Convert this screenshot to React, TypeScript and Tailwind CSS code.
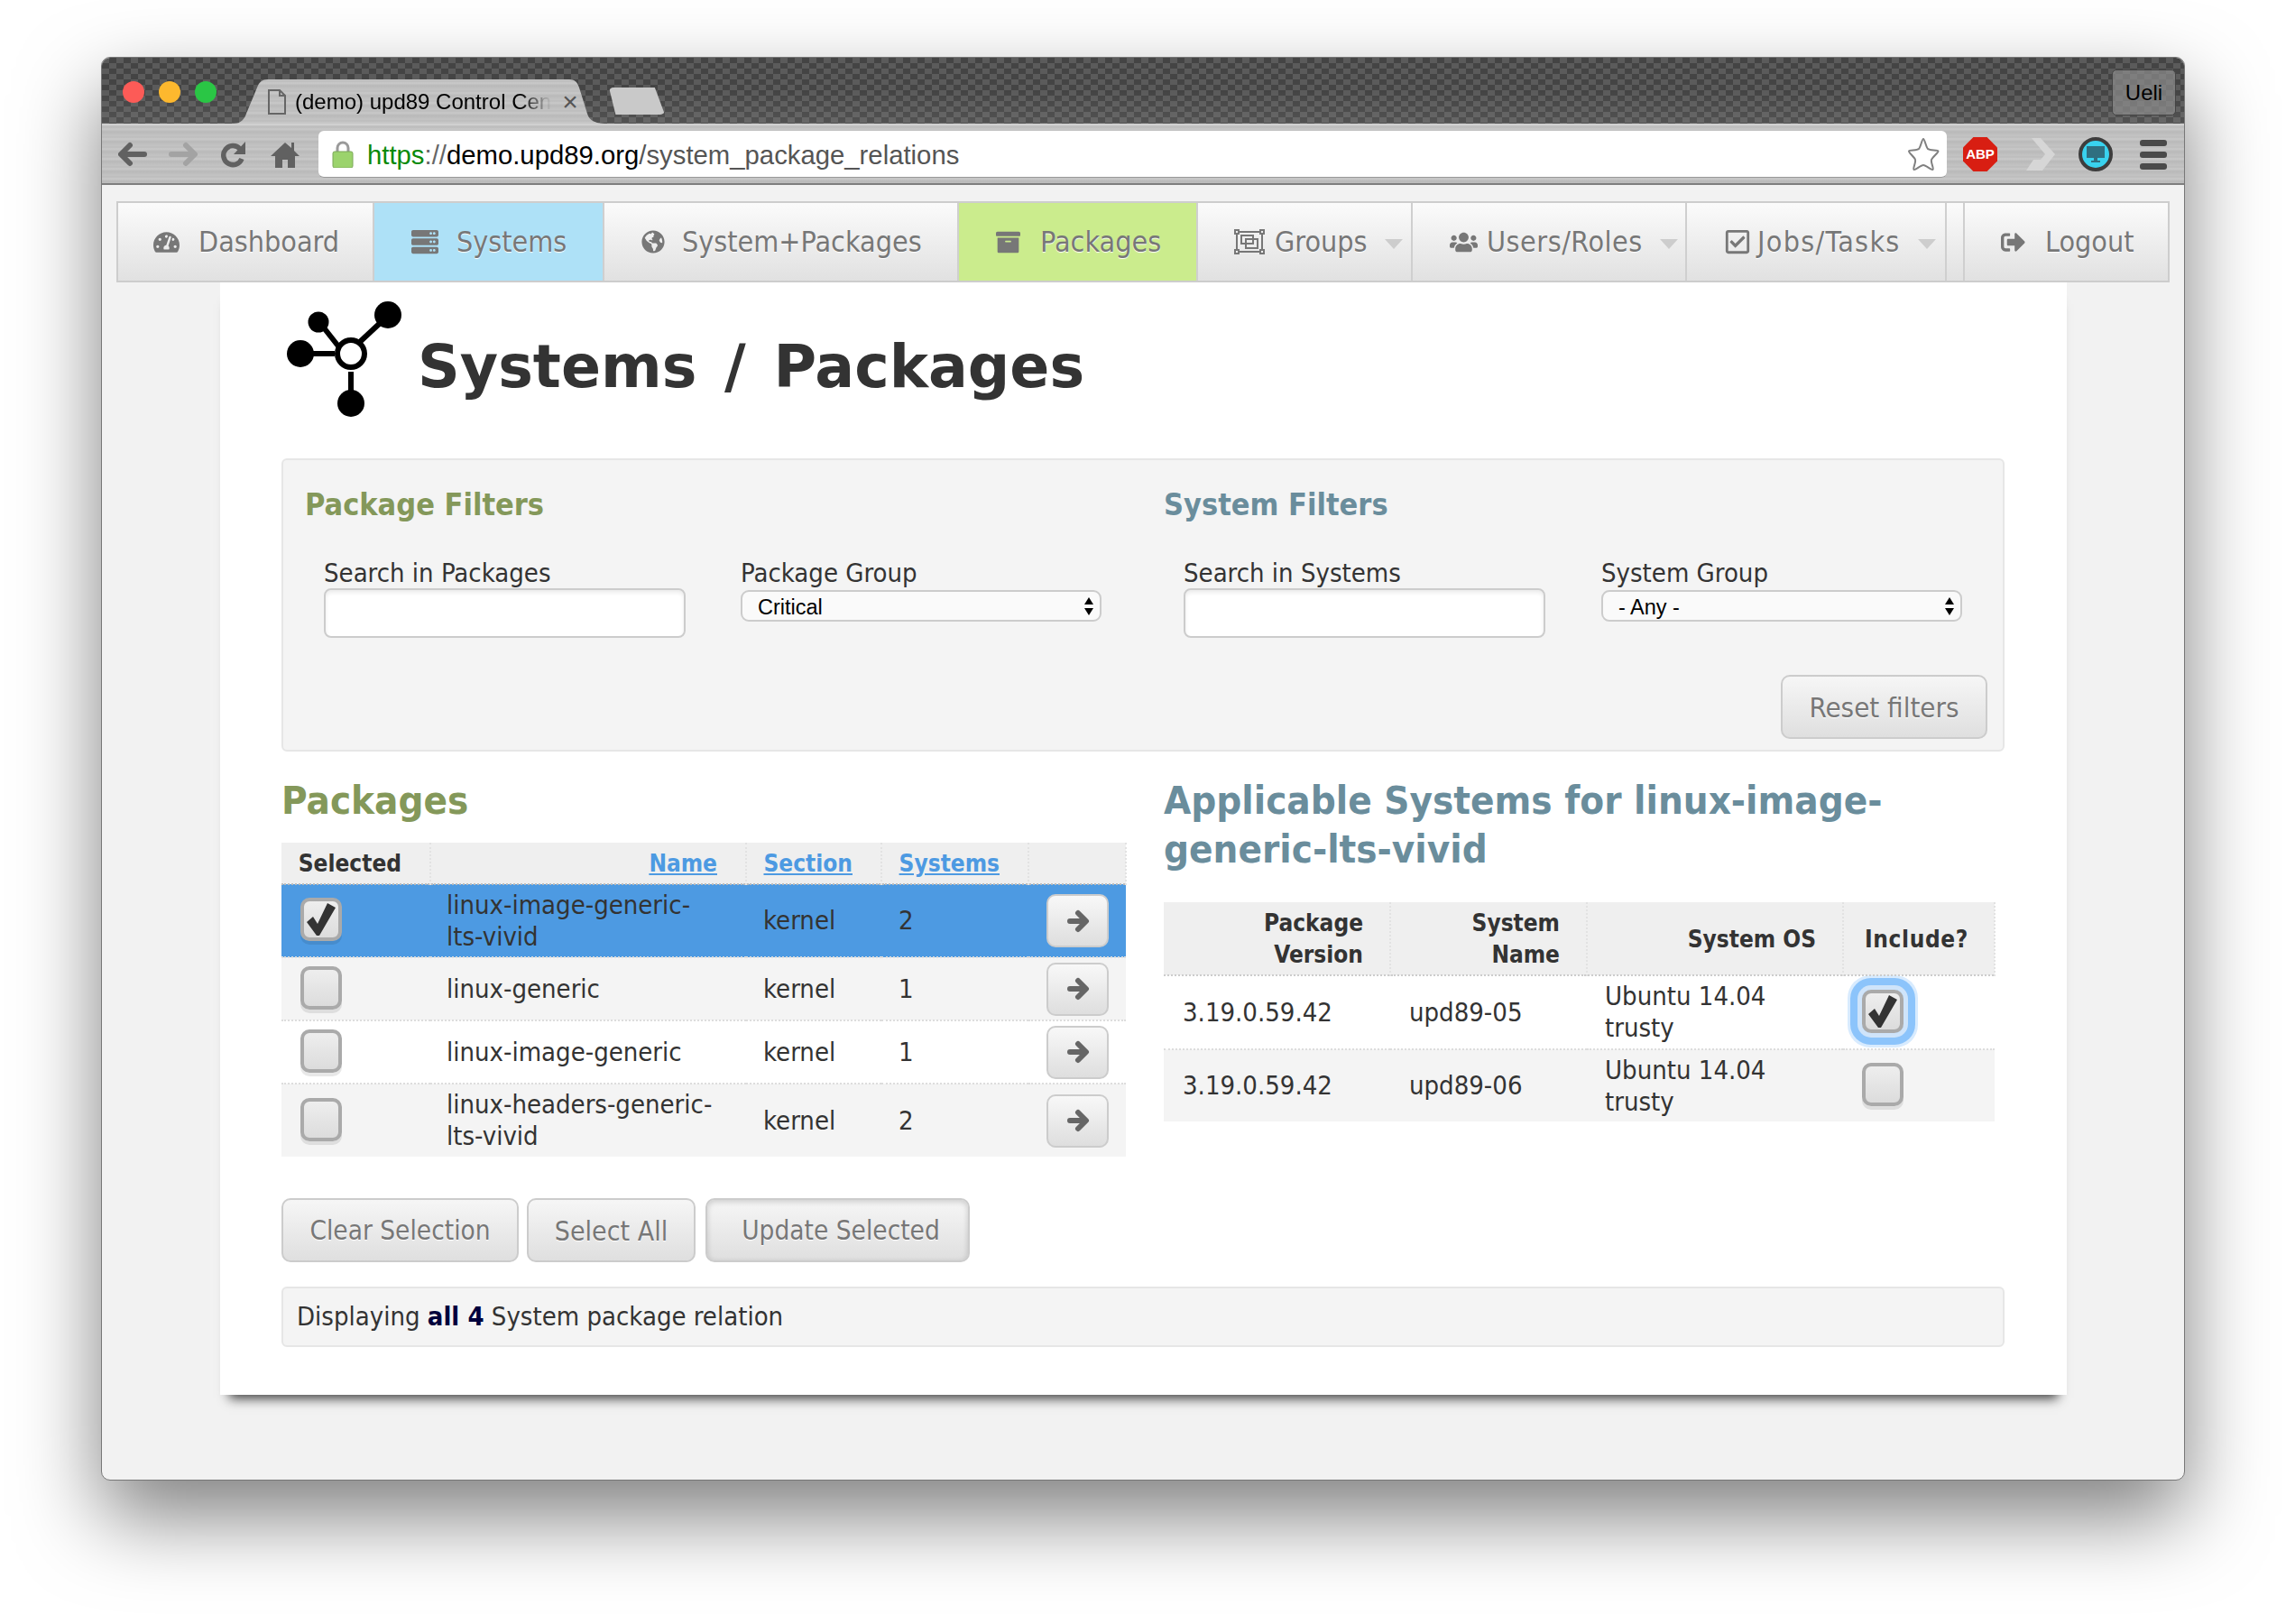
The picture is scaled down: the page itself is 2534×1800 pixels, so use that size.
import React from 'react';
import {
  FaTachometerAlt,
  FaServer,
  FaGlobeAmericas,
  FaArchive,
  FaUsers,
  FaRegCheckSquare,
  FaSignOutAlt,
} from 'react-icons/fa';

const textShadow = '[text-shadow:0_1px_1px_#fff]';

function Caret() {
  return <div className="ml-[19px] mt-[4px] w-0 h-0 border-x-[10px] border-t-[11px] border-x-transparent border-t-[#cdcdcd]" />;
}

function GroupsIcon() {
  return (
    <svg width="34" height="28" viewBox="0 0 34 28" fill="none" stroke="#777" strokeWidth="2">
      <rect x="3" y="3" width="28" height="22" />
      <rect x="8" y="7" width="13" height="9" />
      <rect x="13" y="11" width="13" height="10" />
      <rect x="1" y="1" width="4" height="4" fill="#eee" />
      <rect x="29" y="1" width="4" height="4" fill="#eee" />
      <rect x="1" y="23" width="4" height="4" fill="#eee" />
      <rect x="29" y="23" width="4" height="4" fill="#eee" />
    </svg>
  );
}

function NavBar() {
  const itemCls = 'flex items-center h-full border-r-2 border-[#cfcfcf] text-[#777] text-[32px] whitespace-nowrap ' + textShadow;
  const plain = 'bg-gradient-to-b from-[#fbfbfb] to-[#e1e1e1]';
  return (
    <nav className="ml-[16px] mt-[18px] w-[2276px] h-[90px] flex border-2 border-[#cdcdcd]">
      <div className={itemCls + ' w-[284px] pl-[39px] ' + plain}>
        <FaTachometerAlt size={29} className="mr-[21px]" />Dashboard
      </div>
      <div className={itemCls + ' w-[255px] pl-[41px] bg-[#aee1f7]'}>
        <FaServer size={30} className="mr-[20px]" />Systems
      </div>
      <div className={itemCls + ' w-[393px] pl-[41px] ' + plain}>
        <FaGlobeAmericas size={26} className="mr-[19px]" />System+Packages
      </div>
      <div className={itemCls + ' w-[265px] pl-[41px] bg-[#cbec8d]'}>
        <FaArchive size={27} className="mr-[22px]" />Packages
      </div>
      <div className={itemCls + ' w-[238px] pl-[40px] ' + plain}>
        <div className="mr-[11px]"><GroupsIcon /></div>Groups<Caret />
      </div>
      <div className={itemCls + ' w-[304px] pl-[41px] ' + plain}>
        <FaUsers size={31} className="mr-[10px]" />
        <span className="tracking-[0.5px]">Users/Roles</span>
        <Caret />
      </div>
      <div className={itemCls + ' w-[288px] pl-[41px] ' + plain}>
        <FaRegCheckSquare size={30} className="mr-[7px]" />
        <span className="tracking-[1.3px]">Jobs/Tasks</span>
        <Caret />
      </div>
      <div className={'w-[20px] h-full border-r-2 border-[#cfcfcf] ' + plain} />
      <div className={'flex items-center h-full flex-1 text-[#777] text-[32px] pl-[40px] ' + textShadow + ' ' + plain}>
        <FaSignOutAlt size={27} className="mr-[22px]" />Logout
      </div>
    </nav>
  );
}

function BrowserChrome() {
  const brushed =
    'bg-[repeating-linear-gradient(180deg,#c4c4c4_0,#bcbcbc_2px,#c9c9c9_4px,#b9b9b9_7px,#c2c2c2_11px)]';
  return (
    <>
      <div className="h-[73px] flex bg-[linear-gradient(180deg,transparent_50%,rgba(255,255,255,0.08)),repeating-conic-gradient(#444_0_25%,#5b5b5b_0_50%)] bg-[length:100%_100%,16px_12px] rounded-t-[9px]">
        <div className="flex gap-[16px] pl-[23px] pt-[26px]">
          <div className="w-[24px] h-[24px] rounded-full bg-[#fc5b57]" />
          <div className="w-[24px] h-[24px] rounded-full bg-[#fdb82e]" />
          <div className="w-[24px] h-[24px] rounded-full bg-[#2ac645]" />
        </div>
        <div
          className={
            "ml-[19px] mt-[24px] w-[414px] h-[49px] flex items-center pl-[38px] text-[24px] text-black font-['Liberation_Sans',sans-serif] " +
            "[clip-path:path('M0_49C8_49_12_44_14_38L26_9C28_3_32_0_38_0L372_0C378_0_381_3_383_9L392_38C394_44_398_49_414_49Z')] " +
            brushed
          }
        >
          <svg width="20" height="28" viewBox="0 0 20 28" fill="none" stroke="#666" strokeWidth="2" className="shrink-0">
            <path d="M1 1h12l6 6v20H1z" />
            <path d="M13 1v6h6" />
          </svg>
          <span className="ml-[10px] whitespace-nowrap [mask-image:linear-gradient(90deg,#000_88%,transparent_100%)]">
            (demo) upd89 Control Cen
          </span>
          <span className="ml-[12px] text-[#555] text-[30px] leading-[30px]">×</span>
        </div>
        <div className="self-end mb-[10px] ml-[2px] w-[62px] h-[30px] bg-[#c9c9c9] rounded-[5px] [clip-path:polygon(0_0,82%_0,100%_100%,12%_100%)]" />
        <div className="ml-auto mr-[9px] mt-[13px] w-[71px] h-[51px] flex items-center justify-center rounded-[5px] border border-[#444] bg-[#8d8d8d]/70 text-black text-[24px] font-['Liberation_Sans',sans-serif]">
          Ueli
        </div>
      </div>

      <div className={'h-[68px] flex items-center border-b-2 border-t-2 border-b-[#7e7e7e] border-t-[#d0d0d0] ' + brushed}>
        <svg width="32" height="28" viewBox="0 0 32 28" fill="none" stroke="#616161" strokeWidth="6" strokeLinecap="round" strokeLinejoin="round" className="ml-[18px]">
          <path d="M13 4L3 14l10 10M4 14h25" />
        </svg>
        <svg width="32" height="28" viewBox="0 0 32 28" fill="none" stroke="#a3a3a3" strokeWidth="6" strokeLinecap="round" strokeLinejoin="round" className="ml-[24px]">
          <path d="M19 4l10 10-10 10M28 14H3" />
        </svg>
        <svg width="30" height="30" viewBox="0 0 30 30" fill="none" className="ml-[25px]">
          <path d="M22 9a10.5 10.5 0 1 0 2 11" stroke="#616161" strokeWidth="5.5" />
          <path d="M28 1v14H15z" fill="#616161" />
        </svg>
        <svg width="32" height="30" viewBox="0 0 32 30" fill="#616161" className="ml-[26px]">
          <path d="M16 2L0 17h5v13h8v-9h6v9h8V17h5l-6-6V2h-3v6z" />
        </svg>
        <div className="ml-[21px] w-[1805px] h-[52px] flex items-center bg-white rounded-[6px] border-b border-[#999] pl-[15px] pr-[8px]">
          <svg width="24" height="30" viewBox="0 0 24 30">
            <path d="M6 13V8a6 6 0 0 1 12 0v5" fill="none" stroke="#9a9a9a" strokeWidth="3" />
            <rect x="1" y="12" width="22" height="18" rx="2" fill="#9bd36c" stroke="#7ba858" />
          </svg>
          <span className="ml-[15px] mt-[2px] text-[29.3px] font-['Liberation_Sans',sans-serif] whitespace-nowrap">
            <span className="text-[#0a8a0a]">https</span>
            <span className="text-[#666]">://</span>
            <span className="text-black">demo.upd89.org</span>
            <span className="text-[#555]">/system_package_relations</span>
          </span>
          <svg width="36" height="38" viewBox="0 0 36 38" fill="#fff" stroke="#808080" strokeWidth="2" strokeLinejoin="round" className="ml-auto">
            <path d="M18 2c1.500 0 3 9 5 11s11 1 11.500 2.500S28 22 27 25s3 10 1.500 11S21 31 18 31s-9 6-10.500 5S10 28 9 25s-7.500-8-7-9.500S11 15 13 13s3.500-11 5-11z" />
          </svg>
        </div>
        <div className="ml-[18px] w-[38px] h-[38px] flex items-center justify-center bg-[#d81e12] text-white text-[15px] font-bold font-['Liberation_Sans',sans-serif] [clip-path:polygon(30%_0,70%_0,100%_30%,100%_70%,70%_100%,30%_100%,0_70%,0_30%)]">
          ABP
        </div>
        <svg width="32" height="36" viewBox="0 0 32 36" fill="#d6d6d6" className="ml-[32px]">
          <path d="M6 0h10l16 18-14 18H0l8-12h8l5-6L6 0z" />
        </svg>
        <div className="ml-[26px] w-[38px] h-[38px] flex items-center justify-center rounded-full bg-[#39d2ee] border-[4px] border-[#3d3d3d]">
          <svg width="22" height="20" viewBox="0 0 22 20" fill="#2f6f80">
            <path d="M1 1h20v13H1zM9 14h4v3h3v2H6v-2h3z" />
          </svg>
        </div>
        <div className="ml-[30px] flex flex-col gap-[6px]">
          <div className="w-[30px] h-[7px] rounded-[3px] bg-[#4a4a4a]" />
          <div className="w-[30px] h-[7px] rounded-[3px] bg-[#4a4a4a]" />
          <div className="w-[30px] h-[7px] rounded-[3px] bg-[#4a4a4a]" />
        </div>
      </div>
    </>
  );
}

function NodesIcon() {
  return (
    <svg width="130" height="132" viewBox="0 0 130 132" className="shrink-0">
      <g stroke="#000" strokeWidth="6">
        <path d="M71 58L115 17M38 25L64 58M17 60H55M73 80v35" fill="none" />
      </g>
      <circle cx="114" cy="17" r="15" fill="#000" />
      <circle cx="37" cy="25" r="11.5" fill="#000" />
      <circle cx="17" cy="60" r="15" fill="#000" />
      <circle cx="73" cy="115" r="15" fill="#000" />
      <circle cx="73" cy="60" r="15" fill="#fff" stroke="#000" strokeWidth="6" />
    </svg>
  );
}

function Field(props: { label: string; children: React.ReactNode }) {
  return (
    <div>
      <div className="h-[34px] leading-[34px] text-[#333] text-[29px] whitespace-nowrap">{props.label}</div>
      {props.children}
    </div>
  );
}

function SearchInput() {
  return (
    <input className="block w-[401px] h-[55px] bg-white rounded-[8px] border-2 border-[#ccc] shadow-[inset_0_3px_4px_rgba(0,0,0,0.08)]" />
  );
}

function FakeSelect(props: { value: string }) {
  return (
    <div className="relative mt-[2px] w-[400px] h-[35px]">
      <select
        defaultValue={props.value}
        className="w-full h-full appearance-none bg-[#fafafa] rounded-[9px] border-2 border-[#ccc] pl-[17px] text-black text-[23.5px] font-['Liberation_Sans',sans-serif]"
      >
        <option>{props.value}</option>
      </select>
      <svg width="10" height="20" viewBox="0 0 10 20" fill="#000" className="absolute right-[9px] top-[8px]">
        <path d="M5 0l5 8H0zM5 20l-5-8h10z" />
      </svg>
    </div>
  );
}

function Btn(props: { label: string; cls: string }) {
  return (
    <button
      className={
        'h-[71px] pt-[2px] rounded-[10px] border-2 border-[#ccc] bg-gradient-to-b from-[#f6f6f6] to-[#dfdfdf] text-[#777] text-center ' +
        textShadow +
        ' ' +
        props.cls
      }
    >
      {props.label}
    </button>
  );
}

function Check(props: { checked?: boolean; focus?: boolean }) {
  return (
    <div
      className={
        'mb-[3px] w-[46px] h-[48px] flex items-center justify-center rounded-[10px] border-4 border-[#aaa] bg-gradient-to-b from-[#eee] to-[#dcdcdc] ' +
        (props.focus
          ? 'shadow-[0_0_0_5px_#cfe4fa,0_0_0_13px_#8cc4fb,0_0_0_16px_#d8ebfe]'
          : 'shadow-[0_4px_0_rgba(0,0,0,0.09)]')
      }
    >
      {props.checked && (
        <svg width="32" height="36" viewBox="0 0 32 36" fill="#333">
          <path d="M0 21l7-6 5 8L23 0l9 5-18 31h-3z" />
        </svg>
      )}
    </div>
  );
}

function ArrowBtn() {
  return (
    <button className="w-[69px] h-[59px] flex items-center justify-center rounded-[10px] border-2 border-[#ccc] bg-gradient-to-b from-[#f8f8f8] to-[#dedede]">
      <svg width="26" height="26" viewBox="0 0 26 26" fill="none" stroke="#666" strokeWidth="6" strokeLinejoin="round" strokeLinecap="round">
        <path d="M13 4l9 9-9 9M20 13H4" />
      </svg>
    </button>
  );
}

const pkgRows = [
  { name: 'linux-image-generic-lts-vivid', n: '2', h: 'h-[81px]', bg: 'bg-[#4d9ae2]', on: true },
  { name: 'linux-generic', n: '1', h: 'h-[70px]', bg: 'bg-[#f4f4f4]', on: false },
  { name: 'linux-image-generic', n: '1', h: 'h-[70px]', bg: 'bg-white', on: false },
  { name: 'linux-headers-generic-lts-vivid', n: '2', h: 'h-[81px]', bg: 'bg-[#f4f4f4]', on: false },
];

const sysRows = [
  { host: 'upd89-05', h: 'h-[82px]', bg: 'bg-white', on: true },
  { host: 'upd89-06', h: 'h-[80px]', bg: 'bg-[#f4f4f4]', on: false },
];

function PackagesTable() {
  const th = 'font-bold text-right pt-[2px] pr-[31px] pl-[10px] border-r-2 border-dotted border-[#e2e2e2]';
  const link = 'text-[#4d9ae2] underline';
  return (
    <table className="w-[936px] table-fixed border-collapse text-[#333] text-[29px] leading-[35px]">
      <colgroup>
        <col className="w-[165px]" />
        <col className="w-[350px]" />
        <col className="w-[150px]" />
        <col className="w-[163px]" />
        <col className="w-[108px]" />
      </colgroup>
      <thead>
        <tr className="h-[46px] bg-[#efefef] border-b-2 border-dotted border-[#bbb] text-[26px]">
          <th className={th}>Selected</th>
          <th className={th}><a className={link}>Name</a></th>
          <th className={th}><a className={link}>Section</a></th>
          <th className={th + ' pr-[29px]'}><a className={link}>Systems</a></th>
          <th className="border-r-2 border-dotted border-[#e2e2e2]" />
        </tr>
      </thead>
      <tbody>
        {pkgRows.map((r) => (
          <tr key={r.name} className={r.h + ' ' + r.bg + ' border-b-2 border-dotted border-[#ddd] last:border-b-0'}>
            <td className="pl-[21px]"><Check checked={r.on} /></td>
            <td className="pl-[18px] pr-[30px]">{r.name}</td>
            <td className="pl-[19px]">kernel</td>
            <td className="pl-[19px]">{r.n}</td>
            <td className="pl-[20px]"><ArrowBtn /></td>
          </tr>
        ))}
      </tbody>
    </table>
  );
}

function SystemsTable() {
  const th = 'font-bold text-right pt-[2px] pr-[29px] pl-[10px] border-r-2 border-dotted border-[#e2e2e2]';
  return (
    <table className="w-[921px] table-fixed border-collapse text-[#333] text-[29px] leading-[35px]">
      <colgroup>
        <col className="w-[251px]" />
        <col className="w-[218px]" />
        <col className="w-[284px]" />
        <col className="w-[168px]" />
      </colgroup>
      <thead>
        <tr className="h-[81px] bg-[#efefef] border-b-2 border-dotted border-[#ccc] text-[26px]">
          <th className={th}>Package<br />Version</th>
          <th className={th}>System<br />Name</th>
          <th className={th}>System OS</th>
          <th className="font-bold text-left pt-[2px] pl-[23px] tracking-[0.6px] border-r-2 border-dotted border-[#e2e2e2]">Include?</th>
        </tr>
      </thead>
      <tbody>
        {sysRows.map((r) => (
          <tr key={r.host} className={r.h + ' ' + r.bg + ' border-b-2 border-dotted border-[#ddd] last:border-b-0'}>
            <td className="pl-[21px]">3.19.0.59.42</td>
            <td className="pl-[21px]">{r.host}</td>
            <td className="pl-[20px]">Ubuntu 14.04<br />trusty</td>
            <td className="pl-[21px]"><Check checked={r.on} focus={r.on} /></td>
          </tr>
        ))}
      </tbody>
    </table>
  );
}

export default function App() {
  return (
    <div className="w-[2534px] h-[1800px] bg-white pt-[63px] pl-[112px] font-['DejaVu_Sans_Condensed','DejaVu_Sans',sans-serif] [font-stretch:condensed]">
      <div className="w-[2310px] h-[1578px] rounded-[10px] border border-[#777] bg-[#f2f2f2] shadow-[0_40px_90px_rgba(0,0,0,0.5)]">
        <BrowserChrome />
        <NavBar />

        <main className="ml-[131px] w-[2047px] bg-white px-[68px] pb-[53px] shadow-[0_14px_12px_-10px_rgba(0,0,0,0.75)]">
          <div className="h-[195px] flex pl-[4px]">
            <div className="mt-[19px]"><NodesIcon /></div>
            <h1 className="ml-[17px] mt-[49px] text-[65px] leading-[90px] font-bold text-[#333] whitespace-nowrap [word-spacing:8px] font-['DejaVu_Sans',sans-serif] [font-stretch:normal]">
              Systems / Packages
            </h1>
          </div>

          <section className="w-[1910px] h-[325px] rounded-[6px] border-2 border-[#e6e6e6] bg-[#f4f4f4] pl-[24px] pr-[17px] pt-[29px]">
            <div className="grid grid-cols-[952px_1fr]">
              <div>
                <h3 className="h-[40px] leading-[40px] text-[34px] font-bold text-[#84985a]">Package Filters</h3>
                <div className="mt-[39px] pl-[21px] grid grid-cols-[462px_1fr]">
                  <Field label="Search in Packages"><SearchInput /></Field>
                  <Field label="Package Group"><FakeSelect value="Critical" /></Field>
                </div>
              </div>
              <div>
                <h3 className="h-[40px] leading-[40px] text-[34px] font-bold text-[#6a8d9c]">System Filters</h3>
                <div className="mt-[39px] pl-[22px] grid grid-cols-[463px_1fr]">
                  <Field label="Search in Systems"><SearchInput /></Field>
                  <Field label="System Group"><FakeSelect value="- Any -" /></Field>
                </div>
              </div>
            </div>
            <div className="mt-[41px] flex justify-end">
              <Btn label="Reset filters" cls="w-[229px] text-[31px]" />
            </div>
          </section>

          <div className="mt-[27px] flex gap-[42px]">
            <div className="w-[936px]">
              <h2 className="h-[54px] leading-[54px] text-[43.5px] font-bold text-[#84985a]">Packages</h2>
              <div className="mt-[20px]"><PackagesTable /></div>
              <div className="mt-[46px] flex">
                <Btn label="Clear Selection" cls="w-[263px] text-[29.5px]" />
                <Btn label="Select All" cls="ml-[9px] w-[187px] text-[30px]" />
                <Btn label="Update Selected" cls="ml-[11px] w-[293px] pl-[7px] text-[29.5px] shadow-[inset_0_2px_6px_rgba(0,0,0,0.18)]" />
              </div>
            </div>
            <div className="flex-1">
              <h2 className="leading-[54px] text-[43.5px] font-bold text-[#6a8d9c]">
                Applicable Systems for linux-image-<br />generic-lts-vivid
              </h2>
              <div className="mt-[32px]"><SystemsTable /></div>
            </div>
          </div>

          <div className="mt-[27px] w-[1910px] h-[67px] flex items-center rounded-[6px] border-2 border-[#e6e6e6] bg-[#f4f4f4] pl-[15px] pt-[1px] text-[#333] text-[29px]">
            <span>
              Displaying <b className="text-[#00003c]">all 4</b> System package relation
            </span>
          </div>
        </main>
      </div>
    </div>
  );
}
